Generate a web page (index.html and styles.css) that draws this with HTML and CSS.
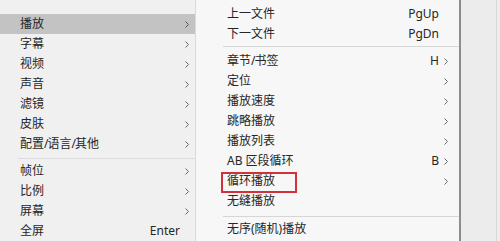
FILE: index.html
```html
<!DOCTYPE html>
<html>
<head>
<meta charset="utf-8">
<link rel="stylesheet" href="styles.css">
</head>
<body>
<div class="screen">
  <div class="menu left">
    <div class="row ghost"><span class="label">打开文件</span></div>
    <div class="gap"></div>
    <div class="row active"><span class="label">播放</span><span class="arr"><svg viewBox="0 0 4 7" width="4" height="7"><path d="M0.5 0.5 L3.5 3.5 L0.5 6.5" fill="none" stroke="#555" stroke-width="1"/></svg></span></div>
    <div class="row"><span class="label">字幕</span><span class="arr"><svg viewBox="0 0 4 7" width="4" height="7"><path d="M0.5 0.5 L3.5 3.5 L0.5 6.5" fill="none" stroke="#666" stroke-width="1"/></svg></span></div>
    <div class="row"><span class="label">视频</span><span class="arr"><svg viewBox="0 0 4 7" width="4" height="7"><path d="M0.5 0.5 L3.5 3.5 L0.5 6.5" fill="none" stroke="#666" stroke-width="1"/></svg></span></div>
    <div class="row"><span class="label">声音</span><span class="arr"><svg viewBox="0 0 4 7" width="4" height="7"><path d="M0.5 0.5 L3.5 3.5 L0.5 6.5" fill="none" stroke="#666" stroke-width="1"/></svg></span></div>
    <div class="row"><span class="label">滤镜</span><span class="arr"><svg viewBox="0 0 4 7" width="4" height="7"><path d="M0.5 0.5 L3.5 3.5 L0.5 6.5" fill="none" stroke="#666" stroke-width="1"/></svg></span></div>
    <div class="row"><span class="label">皮肤</span><span class="arr"><svg viewBox="0 0 4 7" width="4" height="7"><path d="M0.5 0.5 L3.5 3.5 L0.5 6.5" fill="none" stroke="#666" stroke-width="1"/></svg></span></div>
    <div class="row"><span class="label">配置<span class="sl">/</span>语言<span class="sl">/</span>其他</span><span class="arr"><svg viewBox="0 0 4 7" width="4" height="7"><path d="M0.5 0.5 L3.5 3.5 L0.5 6.5" fill="none" stroke="#666" stroke-width="1"/></svg></span></div>
    <div class="sep"></div>
    <div class="row"><span class="label">帧位</span><span class="arr"><svg viewBox="0 0 4 7" width="4" height="7"><path d="M0.5 0.5 L3.5 3.5 L0.5 6.5" fill="none" stroke="#666" stroke-width="1"/></svg></span></div>
    <div class="row"><span class="label">比例</span><span class="arr"><svg viewBox="0 0 4 7" width="4" height="7"><path d="M0.5 0.5 L3.5 3.5 L0.5 6.5" fill="none" stroke="#666" stroke-width="1"/></svg></span></div>
    <div class="row"><span class="label">屏幕</span><span class="arr"><svg viewBox="0 0 4 7" width="4" height="7"><path d="M0.5 0.5 L3.5 3.5 L0.5 6.5" fill="none" stroke="#666" stroke-width="1"/></svg></span></div>
    <div class="row"><span class="label">全屏</span><span class="key">Enter</span><span class="arr"></span></div>
  </div>
  <div class="menu right">
    <div class="row"><span class="label">上一文件</span><span class="key">PgUp</span><span class="arr"></span></div>
    <div class="row"><span class="label">下一文件</span><span class="key">PgDn</span><span class="arr"></span></div>
    <div class="sep"></div>
    <div class="row"><span class="label">章节<span class="sl">/</span>书签</span><span class="key">H</span><span class="arr"><svg viewBox="0 0 4 7" width="4" height="7"><path d="M0.5 0.5 L3.5 3.5 L0.5 6.5" fill="none" stroke="#666" stroke-width="1"/></svg></span></div>
    <div class="row"><span class="label">定位</span><span class="arr"><svg viewBox="0 0 4 7" width="4" height="7"><path d="M0.5 0.5 L3.5 3.5 L0.5 6.5" fill="none" stroke="#666" stroke-width="1"/></svg></span></div>
    <div class="row"><span class="label">播放速度</span><span class="arr"><svg viewBox="0 0 4 7" width="4" height="7"><path d="M0.5 0.5 L3.5 3.5 L0.5 6.5" fill="none" stroke="#666" stroke-width="1"/></svg></span></div>
    <div class="row"><span class="label">跳略播放</span><span class="arr"><svg viewBox="0 0 4 7" width="4" height="7"><path d="M0.5 0.5 L3.5 3.5 L0.5 6.5" fill="none" stroke="#666" stroke-width="1"/></svg></span></div>
    <div class="row"><span class="label">播放列表</span><span class="arr"><svg viewBox="0 0 4 7" width="4" height="7"><path d="M0.5 0.5 L3.5 3.5 L0.5 6.5" fill="none" stroke="#666" stroke-width="1"/></svg></span></div>
    <div class="row"><span class="label">AB 区段循环</span><span class="key">B</span><span class="arr"><svg viewBox="0 0 4 7" width="4" height="7"><path d="M0.5 0.5 L3.5 3.5 L0.5 6.5" fill="none" stroke="#666" stroke-width="1"/></svg></span></div>
    <div class="row marked"><span class="label">循环播放</span><span class="arr"><svg viewBox="0 0 4 7" width="4" height="7"><path d="M0.5 0.5 L3.5 3.5 L0.5 6.5" fill="none" stroke="#666" stroke-width="1"/></svg></span><span class="redbox"></span></div>
    <div class="row"><span class="label">无缝播放</span><span class="arr"></span></div>
    <div class="sep last"></div>
    <div class="row"><span class="label">无序(随机)播放</span><span class="arr"></span></div>
  </div>
  <div class="divider"></div>
  <div class="backdrop"><div class="faint"></div></div>
</div>
</body>
</html>
```
FILE: styles.css
```css
html, body {
  margin: 0;
  padding: 0;
}
body {
  width: 500px;
  height: 241px;
  overflow: hidden;
  font-family: "Noto Sans", "Noto Sans CJK SC", sans-serif;
  font-size: 12px;
  color: #262626;
}
.screen {
  display: flex;
  height: 241px;
  overflow: hidden;
  background: #ebebeb;
}
.menu {
  display: flex;
  flex-direction: column;
  flex-shrink: 0;
}
.left {
  width: 195px;
  background: #f0f0f0;
  border-right: 1px solid #dadada;
}
.right {
  width: 263px;
  background: #f7f7f7;
  padding-top: 4px;
}
.row {
  display: flex;
  align-items: center;
  height: 20px;
  flex-shrink: 0;
  line-height: 20px;
  white-space: nowrap;
}
.left .row {
  padding: 0 6px 0 20px;
}
.right .row {
  padding: 0 10px 0 31px;
  position: relative;
}
.label {
  flex: 1;
}
.sl {
  letter-spacing: -1px;
}
.arr {
  width: 4px;
  margin-left: 5px;
  display: flex;
  align-items: center;
}
.right .arr {
  width: 5px;
}
.ghost {
  margin-top: -16px;
  color: #555;
}
.gap {
  height: 10px;
  flex-shrink: 0;
}
.active {
  background: #c3c3c3;
}
.sep {
  height: 7px;
  flex-shrink: 0;
}
.left .sep {
  margin-left: 18px;
  background: linear-gradient(#dcdcdc, #dcdcdc) 0 4px / 100% 1px no-repeat;
}
.right .sep {
  margin-left: 27px;
  background: linear-gradient(#d6d6d6, #d6d6d6) 0 2px / 100% 1px no-repeat;
}
.right .sep.last {
  height: 8px;
  background-position: 0 5px;
}
.redbox {
  position: absolute;
  left: 25px;
  top: 1px;
  width: 76px;
  height: 21px;
  box-sizing: border-box;
  border: 2px solid #d2303a;
}
.divider {
  width: 2px;
  flex-shrink: 0;
  background: #8d8d8d;
}
.backdrop {
  flex: 1;
  display: flex;
  justify-content: flex-end;
  background: #ececec;
}
.faint {
  width: 1px;
  margin-right: 3px;
  background: #d8d8d8;
}
```
